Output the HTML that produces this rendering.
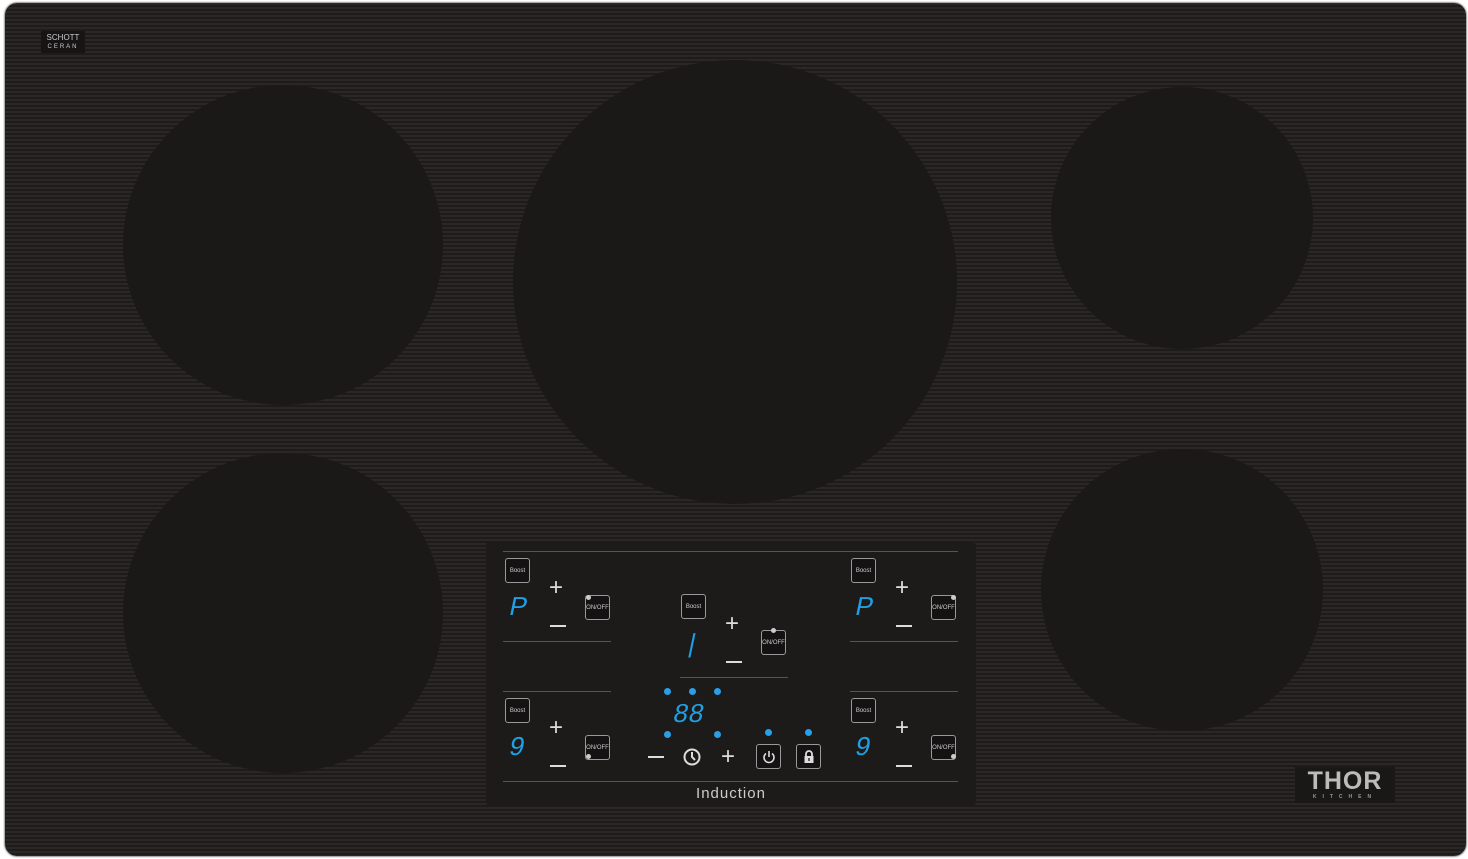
<!DOCTYPE html>
<html><head><meta charset="utf-8"><style>
*{margin:0;padding:0;box-sizing:border-box}
body{width:1468px;height:859px;background:#fff;position:relative;overflow:hidden;font-family:"Liberation Sans",sans-serif}
.top{position:absolute;left:5px;top:3px;width:1461px;height:853px;border-radius:12px;background:repeating-linear-gradient(180deg,#2a2726 0,#2a2726 2px,#1e1c1b 2px,#1e1c1b 4px);box-shadow:0 0 2px #000}
.b{position:absolute;border-radius:50%;background:#1b1918}
.panel{position:absolute;left:486px;top:542px;width:490px;height:264px;background:#1d1b1a;border-radius:4px}
.ln{position:absolute;height:1px;background:#555}
.box{position:absolute;width:25px;height:25px;border:1px solid #999;border-radius:3px;color:#ccc;font-size:6px;display:flex;align-items:center;justify-content:center;background:#141212}
.pm{position:absolute;color:#ddd;font-size:24px;line-height:1;font-weight:300}
.mn{position:absolute;width:16px;height:2px;background:#ddd}
.dg{position:absolute;color:#1ea0e6;font-size:26px;line-height:1;transform:skewX(-12deg)}
.dot{position:absolute;width:7px;height:7px;border-radius:50%;background:#2a9ee8}
.wd{position:absolute;width:5px;height:5px;border-radius:50%;background:#ccc}
</style></head><body>
<div class="top">
<div class="b" style="left:118px;top:82px;width:320px;height:320px"></div>
<div class="b" style="left:508px;top:57px;width:444px;height:444px"></div>
<div class="b" style="left:1046px;top:84px;width:262px;height:262px"></div>
<div class="b" style="left:118px;top:450px;width:320px;height:320px"></div>
<div class="b" style="left:1036px;top:446px;width:282px;height:282px"></div>
<div style="position:absolute;left:36px;top:28px;width:44px;height:22px;background:#161414;color:#ccc;font-size:8px;line-height:8px;text-align:center;padding-top:3px">SCHOTT<br><span style="font-size:6px;letter-spacing:2px">CERAN</span></div>
<div style="position:absolute;left:1290px;top:764px;width:100px;height:36px;background:#1a1817;text-align:center;color:#bbb;font-weight:bold;font-size:25px;line-height:28px;letter-spacing:1px">THOR<div style="font-size:5px;line-height:5px;letter-spacing:6px;color:#999">KITCHEN</div></div>
</div>
<div class="panel"></div>
<div class="ln" style="left:503px;top:551px;width:455px"></div>
<div class="ln" style="left:503px;top:641px;width:108px"></div>
<div class="ln" style="left:850px;top:641px;width:108px"></div>
<div class="ln" style="left:680px;top:677px;width:108px"></div>
<div class="ln" style="left:503px;top:691px;width:108px"></div>
<div class="ln" style="left:850px;top:691px;width:108px"></div>
<div class="ln" style="left:503px;top:781px;width:455px"></div>
<div class="box" style="left:505px;top:558px">Boost</div>
<div class="box" style="left:851px;top:558px">Boost</div>
<div class="box" style="left:681px;top:594px">Boost</div>
<div class="box" style="left:505px;top:698px">Boost</div>
<div class="box" style="left:851px;top:698px">Boost</div>
<div class="box" style="left:585px;top:595px">ON/OFF</div>
<div class="box" style="left:931px;top:595px">ON/OFF</div>
<div class="box" style="left:761px;top:630px">ON/OFF</div>
<div class="box" style="left:585px;top:735px">ON/OFF</div>
<div class="box" style="left:931px;top:735px">ON/OFF</div>
<div class="wd" style="left:586px;top:595px"></div>
<div class="wd" style="left:951px;top:595px"></div>
<div class="wd" style="left:771px;top:628px"></div>
<div class="wd" style="left:586px;top:754px"></div>
<div class="wd" style="left:951px;top:754px"></div>
<div class="pm" style="left:549px;top:576px">+</div><div class="mn" style="left:550px;top:625px"></div>
<div class="pm" style="left:895px;top:576px">+</div><div class="mn" style="left:896px;top:625px"></div>
<div class="pm" style="left:725px;top:612px">+</div><div class="mn" style="left:726px;top:661px"></div>
<div class="pm" style="left:549px;top:716px">+</div><div class="mn" style="left:550px;top:765px"></div>
<div class="pm" style="left:895px;top:716px">+</div><div class="mn" style="left:896px;top:765px"></div>
<div class="mn" style="left:648px;top:756px"></div><div class="pm" style="left:721px;top:745px">+</div>
<div class="dg" style="left:510px;top:593px">P</div>
<div class="dg" style="left:856px;top:593px">P</div>
<div class="dg" style="left:689px;top:630px">|</div>
<div class="dg" style="left:510px;top:733px">9</div>
<div class="dg" style="left:856px;top:733px">9</div>
<div class="dg" style="left:674px;top:700px;letter-spacing:1px">88</div>
<div class="dot" style="left:664px;top:688px"></div><div class="dot" style="left:689px;top:688px"></div><div class="dot" style="left:714px;top:688px"></div>
<div class="dot" style="left:664px;top:731px"></div><div class="dot" style="left:714px;top:731px"></div>
<div class="dot" style="left:765px;top:729px"></div><div class="dot" style="left:805px;top:729px"></div>
<svg style="position:absolute;left:682px;top:747px" width="20" height="20" viewBox="0 0 20 20"><circle cx="10" cy="10" r="7.5" fill="none" stroke="#ddd" stroke-width="2"/><path d="M10 5v5l3 3" stroke="#ddd" stroke-width="2" fill="none"/></svg>
<div class="box" style="left:756px;top:744px"><svg width="16" height="16" viewBox="0 0 16 16"><path d="M5 4.5A5 5 0 1 0 11 4.5M8 2v6" stroke="#ddd" stroke-width="1.6" fill="none"/></svg></div>
<div class="box" style="left:796px;top:744px"><svg width="14" height="16" viewBox="0 0 14 16"><path d="M4 7V5a3 3 0 0 1 6 0v2" stroke="#ddd" stroke-width="1.8" fill="none"/><rect x="2.5" y="7" width="9" height="7" fill="#ddd"/><rect x="6.3" y="9" width="1.4" height="3" fill="#222"/></svg></div>
<div style="position:absolute;left:680px;top:785px;width:102px;text-align:center;color:#ccc;font-size:15px;letter-spacing:1px">Induction</div>
</body></html>
